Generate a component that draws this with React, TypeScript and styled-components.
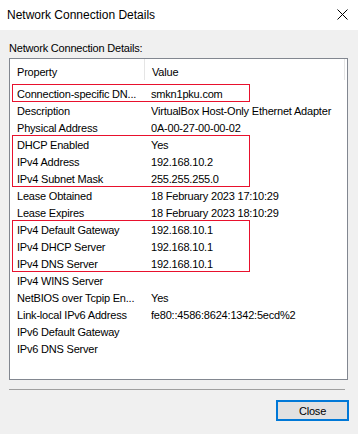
import React from "react";
import styled, { createGlobalStyle } from "styled-components";

const GlobalStyle = createGlobalStyle`
  html, body {
    margin: 0;
    padding: 0;
    background: #f0f0f0;
  }
  body {
    font-family: "Liberation Sans", Arial, sans-serif;
    font-size: 11px;
    letter-spacing: -0.2px;
    color: #000;
  }
`;

const Window = styled.div`
  width: 358px;
  height: 434px;
  display: flex;
  flex-direction: column;
  background: #f0f0f0;
  overflow: hidden;
`;

const TitleBar = styled.div`
  height: 30px;
  flex: none;
  background: #ffffff;
  display: flex;
  align-items: center;
  justify-content: space-between;
  padding: 0 10px 0 7px;
  font-size: 12px;
  letter-spacing: 0;
`;

const CloseGlyph = styled.svg`
  width: 11px;
  height: 11px;
  margin-top: -1px;
`;

const Body = styled.div`
  flex: 1;
  display: flex;
  flex-direction: column;
  padding: 0 10px 0 9px;
`;

const Caption = styled.div`
  height: 28px;
  display: flex;
  align-items: flex-end;
  padding-bottom: 4px;
  box-sizing: border-box;
`;

const ListBox = styled.div`
  height: 322px;
  box-sizing: border-box;
  border: 1px solid #828790;
  background: #ffffff;
  display: flex;
  flex-direction: column;
`;

const Header = styled.div`
  height: 26px;
  flex: none;
  display: grid;
  grid-template-columns: 135px 200px 1fr;
  align-items: stretch;
`;

const HeaderCell = styled.div<{ $last?: boolean }>`
  display: flex;
  align-items: center;
  padding-left: 7px;
  border-right: ${(p) => (p.$last ? "none" : "1px solid #e5e5e5")};
  margin-bottom: 5px;
  padding-top: 5px;
`;

const Group = styled.div<{ $marked?: boolean }>`
  position: relative;
  &::after {
    content: "";
    display: ${(p) => (p.$marked ? "block" : "none")};
    position: absolute;
    left: 2px;
    top: -1px;
    width: 238px;
    bottom: 0;
    border: 1px solid #e8112d;
    box-sizing: border-box;
    pointer-events: none;
  }
`;

const Row = styled.div`
  height: 17px;
  display: grid;
  grid-template-columns: 134px 1fr;
  align-items: center;
  padding-left: 7px;
  white-space: nowrap;
`;

const Cell = styled.span`
  overflow: hidden;
`;

const Separator = styled.div`
  height: 1px;
  background: #a0a0a0;
  margin: 9px 3px 0 0;
`;

const Footer = styled.div`
  display: flex;
  justify-content: flex-end;
  padding-top: 10px;
`;

const Button = styled.button`
  width: 73px;
  height: 21px;
  box-sizing: border-box;
  border: 2px solid #0078d7;
  background: #e1e1e1;
  font-family: inherit;
  font-size: 11px;
  letter-spacing: -0.2px;
  color: #000;
  padding: 0;
  margin-right: -1px;
`;

type Item = [string, string];

const groups: { marked: boolean; items: Item[] }[] = [
  { marked: true, items: [["Connection-specific DN...", "smkn1pku.com"]] },
  {
    marked: false,
    items: [
      ["Description", "VirtualBox Host-Only Ethernet Adapter"],
      ["Physical Address", "0A-00-27-00-00-02"],
    ],
  },
  {
    marked: true,
    items: [
      ["DHCP Enabled", "Yes"],
      ["IPv4 Address", "192.168.10.2"],
      ["IPv4 Subnet Mask", "255.255.255.0"],
    ],
  },
  {
    marked: false,
    items: [
      ["Lease Obtained", "18 February 2023 17:10:29"],
      ["Lease Expires", "18 February 2023 18:10:29"],
    ],
  },
  {
    marked: true,
    items: [
      ["IPv4 Default Gateway", "192.168.10.1"],
      ["IPv4 DHCP Server", "192.168.10.1"],
      ["IPv4 DNS Server", "192.168.10.1"],
    ],
  },
  {
    marked: false,
    items: [
      ["IPv4 WINS Server", ""],
      ["NetBIOS over Tcpip En...", "Yes"],
      ["Link-local IPv6 Address", "fe80::4586:8624:1342:5ecd%2"],
      ["IPv6 Default Gateway", ""],
      ["IPv6 DNS Server", ""],
    ],
  },
];

export default function App() {
  return (
    <>
      <GlobalStyle />
      <Window>
        <TitleBar>
          <span>Network Connection Details</span>
          <CloseGlyph viewBox="0 0 11 11">
            <path d="M0.5 0.5 L10.5 10.5 M10.5 0.5 L0.5 10.5" stroke="#000" strokeWidth="1" fill="none" />
          </CloseGlyph>
        </TitleBar>
        <Body>
          <Caption>Network Connection Details:</Caption>
          <ListBox>
            <Header>
              <HeaderCell>Property</HeaderCell>
              <HeaderCell>Value</HeaderCell>
              <HeaderCell $last />
            </Header>
            {groups.map((g, gi) => (
              <Group key={gi} $marked={g.marked}>
                {g.items.map(([k, v]) => (
                  <Row key={k}>
                    <Cell>{k}</Cell>
                    <Cell>{v}</Cell>
                  </Row>
                ))}
              </Group>
            ))}
          </ListBox>
          <Separator />
          <Footer>
            <Button>Close</Button>
          </Footer>
        </Body>
      </Window>
    </>
  );
}
